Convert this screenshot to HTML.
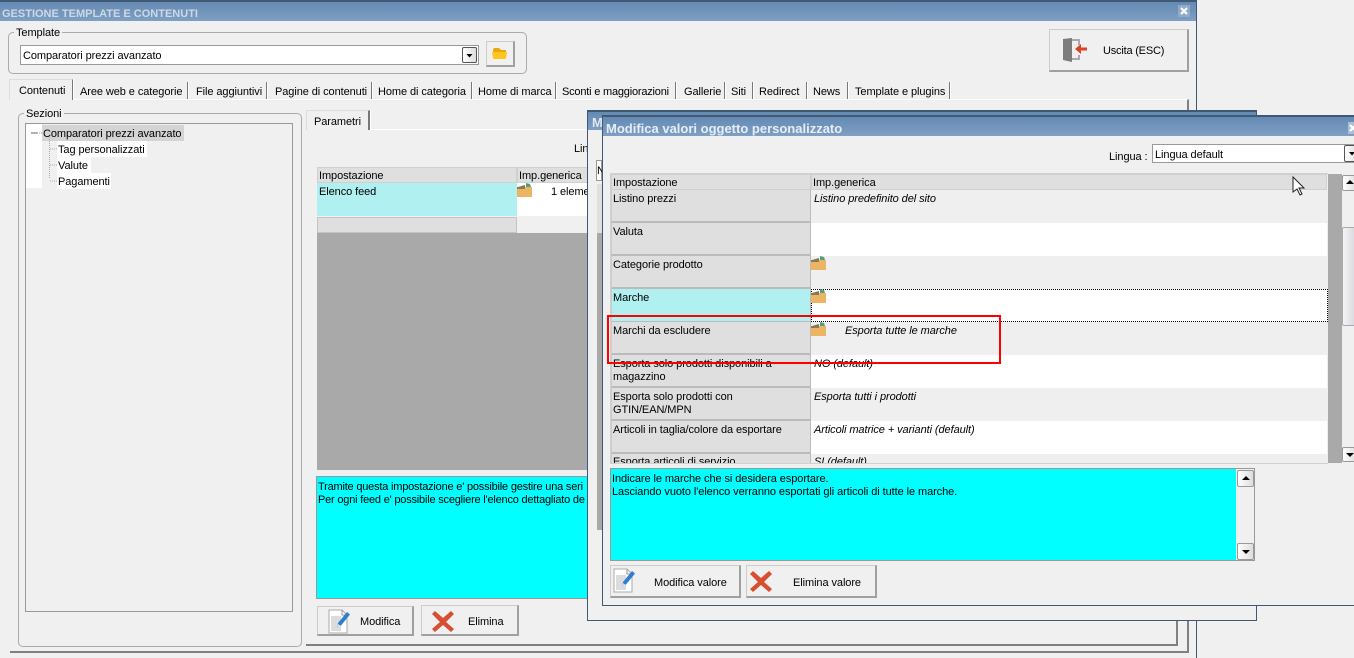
<!DOCTYPE html>
<html><head><meta charset="utf-8"><style>
html,body{margin:0;padding:0;width:1354px;height:658px;overflow:hidden;background:#f0f0f0}
body{position:relative;font:11px/13px "Liberation Sans",sans-serif;color:#000}
div,span.t{position:absolute;box-sizing:border-box}
.t{position:absolute;white-space:nowrap;letter-spacing:-.08px;margin-top:2px}
i.t{font-style:italic}
svg{position:absolute;overflow:visible}
.title{background:linear-gradient(#658ab3,#7f9fc3)}
.win{background:#f0f0f0;border:1px solid #3f5873;border-top-width:2px}
.grp{border:1px solid #aaa;border-radius:5px}
.btn{background:#f0f0f0;border:1px solid #ccc;border-right:2px solid #a0a0a0;border-bottom:2px solid #a0a0a0}
.tab{top:82px;height:17px;border-right:1px solid #777;box-shadow:1px 0 0 #fff}
.hd{background:#dfdfdf;border:1px solid #d0d0d0}
.c1{left:611px;width:200px;height:33px;background:#dfdfdf;border-bottom:2px solid #bbb;border-right:1px solid #bbb;border-left:1px solid #ccc}
.c2{left:811px;width:516px;height:33px}
.sb{background:linear-gradient(90deg,#fff,#ddd);border:1px solid #999;border-radius:2px}
</style></head><body>

<!-- main window -->
<div style="left:-2px;top:0;width:1199px;height:670px;background:#f0f0f0;border:1px solid #3f5873;border-top-width:2px"></div>
<div class="title" style="left:0;top:2px;width:1196px;height:19px"></div>
<span class="t" style="left:2px;top:6px;font-weight:bold;color:#cdd9e6;letter-spacing:0">GESTIONE TEMPLATE E CONTENUTI</span>
<div style="left:1178px;top:5px;width:12px;height:12px;background:#8fabc9"></div>
<svg style="left:1178px;top:5px" width="12" height="12"><path d="M3 3l6 6M9 3l-6 6" stroke="#fff" stroke-width="2.200"/></svg>

<!-- template -->
<div class="grp" style="left:8px;top:32px;width:519px;height:42px"></div>
<span class="t" style="left:14px;top:27px;background:#f0f0f0;padding:0 2px;margin-top:0">Template</span>
<div style="left:20px;top:45px;width:459px;height:20px;background:#fff;border:1px solid #999"></div>
<span class="t" style="left:23px;top:48px">Comparatori prezzi avanzato</span>
<div class="sb" style="left:462px;top:47px;width:15px;height:16px;border-color:#555"></div>
<svg style="left:462px;top:47px" width="15" height="16"><path d="M4.500 7h6l-3 3.500z" fill="#000"/></svg>
<div class="btn" style="left:486px;top:41px;width:29px;height:26px"></div>
<svg style="left:492px;top:47px" width="16" height="13"><path d="M1 3q0 -2 2 -2h4l2 2h5v3H1z" fill="#e9a90c"/><path d="M0 5h15l-1 6q0 1 -1 1H2q-1 0 -1 -1z" fill="#fcc61f"/></svg>

<div class="btn" style="left:1049px;top:29px;width:140px;height:43px"></div>
<svg style="left:1062px;top:38px" width="26" height="24"><path d="M1 1l9 -1v24l-9 -2z" fill="#7c7c7c"/><path d="M10 2h7v5M17 17v4h-7" fill="none" stroke="#aaa" stroke-width="2"/><path d="M13 11l6 -5v3.500h6v3h-6v3.500z" fill="#d9432a"/></svg>
<span class="t" style="left:1103px;top:43px;letter-spacing:-.2px">Uscita (ESC)</span>

<!-- tabs -->
<div style="left:10px;top:99px;width:1179px;height:554px;border-right:2px solid #808080;border-bottom:2px solid #808080;border-top:1px solid #fff"></div>
<div class="tab" style="left:9px;top:79px;width:64px;height:21px;border-left:1px solid #ddd;border-top:1px solid #ddd;background:#f0f0f0"></div><span class="t" style="left:19px;top:83px">Contenuti</span>
<div class="tab" style="left:74px;width:114px"></div><span class="t" style="left:80px;top:84px">Aree web e categorie</span>
<div class="tab" style="left:188px;width:79px"></div><span class="t" style="left:196px;top:84px">File aggiuntivi</span>
<div class="tab" style="left:267px;width:105px"></div><span class="t" style="left:275px;top:84px">Pagine di contenuti</span>
<div class="tab" style="left:372px;width:100px"></div><span class="t" style="left:378px;top:84px">Home di categoria</span>
<div class="tab" style="left:472px;width:84px"></div><span class="t" style="left:478px;top:84px">Home di marca</span>
<div class="tab" style="left:556px;width:120px"></div><span class="t" style="left:562px;top:84px;letter-spacing:-.2px">Sconti e maggiorazioni</span>
<div class="tab" style="left:676px;width:49px"></div><span class="t" style="left:684px;top:84px">Gallerie</span>
<div class="tab" style="left:725px;width:28px"></div><span class="t" style="left:731px;top:84px">Siti</span>
<div class="tab" style="left:753px;width:54px"></div><span class="t" style="left:759px;top:84px">Redirect</span>
<div class="tab" style="left:807px;width:41px"></div><span class="t" style="left:813px;top:84px">News</span>
<div class="tab" style="left:848px;width:102px"></div><span class="t" style="left:855px;top:84px">Template e plugins</span>

<!-- sezioni -->
<div class="grp" style="left:18px;top:113px;width:284px;height:534px"></div>
<span class="t" style="left:24px;top:108px;background:#f0f0f0;padding:0 2px;margin-top:0">Sezioni</span>
<div style="left:25px;top:123px;width:268px;height:489px;border:1px solid #999;background:#f0f0f0"></div>
<div style="left:26px;top:124px;width:16px;height:64px;background:#fff"></div>
<div style="left:42px;top:125px;width:142px;height:16px;background:#d4d4d4"></div>
<div style="left:57px;top:141px;width:90px;height:16px;background:#fff"></div>
<div style="left:57px;top:157px;width:34px;height:16px;background:#fff"></div>
<div style="left:57px;top:173px;width:54px;height:16px;background:#fff"></div>
<svg style="left:30px;top:128px" width="30" height="60"><path d="M1 5h7" stroke="#666"/><path d="M9 5h3M19.500 9v42M20 21h7M20 37h7M20 53h7" stroke="#aaa" stroke-dasharray="1 1"/></svg>
<span class="t" style="left:43px;top:126px">Comparatori prezzi avanzato</span>
<span class="t" style="left:58px;top:142px">Tag personalizzati</span>
<span class="t" style="left:58px;top:158px">Valute</span>
<span class="t" style="left:58px;top:174px">Pagamenti</span>

<!-- parametri panel -->
<div style="left:306px;top:129px;width:872px;height:517px;border-right:2px solid #808080;border-bottom:2px solid #808080;border-top:1px solid #fff"></div>
<div class="tab" style="left:306px;top:110px;width:64px;height:20px;border-left:1px solid #ddd;border-top:1px solid #ddd;border-right:2px solid #777;background:#f0f0f0"></div>
<span class="t" style="left:314px;top:114px">Parametri</span>
<span class="t" style="left:574px;top:141px">Lin</span>
<div class="hd" style="left:317px;top:167px;width:200px;height:16px"></div>
<div class="hd" style="left:517px;top:167px;width:80px;height:16px"></div>
<span class="t" style="left:319px;top:168px">Impostazione</span>
<span class="t" style="left:519px;top:168px">Imp.generica</span>
<div style="left:317px;top:183px;width:200px;height:33px;background:#b0f0f0"></div>
<div style="left:517px;top:183px;width:80px;height:33px;background:#fff"></div>
<span class="t" style="left:319px;top:184px">Elenco feed</span>
<svg style="left:517px;top:183px" width="16" height="14" viewBox="0 0 16 14"><use href="#box"/></svg>
<span class="t" style="left:551px;top:184px">1 eleme</span>
<div style="left:317px;top:217px;width:200px;height:16px;background:#dfdfdf;border:1px solid #c4c4c4"></div>
<div style="left:317px;top:233px;width:280px;height:237px;background:#a9a9a9"></div>
<div style="left:316px;top:476px;width:290px;height:123px;background:#0ff;border:1px solid #999"></div>
<span class="t" style="left:318px;top:479px;letter-spacing:-.2px">Tramite questa impostazione e' possibile gestire una seri</span>
<span class="t" style="left:318px;top:492px;letter-spacing:-.2px">Per ogni feed e' possibile scegliere l'elenco dettagliato de</span>
<div class="btn" style="left:317px;top:606px;width:97px;height:30px"></div>
<svg style="left:328px;top:608px" width="24" height="26"><use href="#pen"/></svg>
<span class="t" style="left:360px;top:614px">Modifica</span>
<div class="btn" style="left:421px;top:605px;width:98px;height:31px"></div>
<svg style="left:431px;top:608px" width="24" height="24"><use href="#xx"/></svg>
<span class="t" style="left:468px;top:614px">Elimina</span>

<!-- behind window -->
<div class="win" style="left:587px;top:110px;width:670px;height:511px"></div>
<div class="title" style="left:588px;top:112px;width:668px;height:18px"></div>
<span class="t" style="left:592px;top:114px;color:#dfe7f0;font-weight:bold;font-size:13px">M</span>
<div style="left:596px;top:160px;width:6px;height:21px;background:#fff;border:1px solid #999"></div>
<span class="t" style="left:597px;top:163px">N</span>
<div style="left:597px;top:184px;width:5px;height:346px;background:#a9a9a9"></div>
<div style="left:597px;top:184px;width:5px;height:49px;background:#dfdfdf"></div>

<!-- front window -->
<div class="win" style="left:602px;top:115px;width:770px;height:491px"></div>
<div class="title" style="left:603px;top:117px;width:760px;height:19px"></div>
<span class="t" style="left:606px;top:120px;font-weight:bold;color:#e6edf5;font-size:13px;letter-spacing:0">Modifica valori oggetto personalizzato</span>
<div style="left:1348px;top:122px;width:8px;height:12px;background:#a9bfd7"></div>
<svg style="left:1348px;top:122px" width="8" height="12"><path d="M2 3l6 6M8 3l-6 6" stroke="#fff" stroke-width="2.200"/></svg>

<span class="t" style="left:1109px;top:149px">Lingua :</span>
<div style="left:1152px;top:144px;width:210px;height:19px;background:#fff;border:1px solid #999"></div>
<span class="t" style="left:1155px;top:147px">Lingua default</span>
<div class="sb" style="left:1344px;top:145px;width:15px;height:17px;border-color:#555"></div>
<svg style="left:1344px;top:145px" width="10" height="17"><path d="M5 7h6l-3 3.500z" fill="#000"/></svg>

<!-- table -->
<div style="left:610px;top:173px;width:718px;height:291px;background:#efefef;border:1px solid #d0d0d0;border-right:0"></div>
<div class="hd" style="left:611px;top:174px;width:200px;height:16px"></div>
<div class="hd" style="left:811px;top:174px;width:516px;height:16px"></div>
<span class="t" style="left:613px;top:175px">Impostazione</span>
<span class="t" style="left:813px;top:175px">Imp.generica</span>

<div class="c1" style="top:190px"></div><div class="c2" style="top:190px;background:#efefef"></div>
<div class="c1" style="top:223px"></div><div class="c2" style="top:223px;background:#fff"></div>
<div class="c1" style="top:256px"></div><div class="c2" style="top:256px;background:#efefef"></div>
<div class="c1" style="top:289px;background:#b0f0f0;border-bottom:1px solid #bbb"></div><div class="c2" style="top:289px;height:33px;width:517px;background:#fff;border:1px dotted #000"></div>
<div class="c1" style="top:322px"></div><div class="c2" style="top:322px;background:#efefef"></div>
<div class="c1" style="top:355px"></div><div class="c2" style="top:355px;background:#fff"></div>
<div class="c1" style="top:388px"></div><div class="c2" style="top:388px;background:#efefef"></div>
<div class="c1" style="top:421px"></div><div class="c2" style="top:421px;background:#fff"></div>
<div class="c1" style="top:454px;height:9px;border-bottom:0"></div><div class="c2" style="top:454px;height:9px;background:#efefef"></div>

<span class="t" style="left:613px;top:191px">Listino prezzi</span>
<i class="t" style="left:814px;top:191px">Listino predefinito del sito</i>
<span class="t" style="left:613px;top:224px">Valuta</span>
<span class="t" style="left:613px;top:257px">Categorie prodotto</span>
<span class="t" style="left:613px;top:290px">Marche</span>
<span class="t" style="left:613px;top:323px">Marchi da escludere</span>
<i class="t" style="left:845px;top:323px">Esporta tutte le marche</i>
<span class="t" style="left:613px;top:356px">Esporta solo prodotti disponibili a</span>
<span class="t" style="left:613px;top:369px">magazzino</span>
<i class="t" style="left:814px;top:356px">NO (default)</i>
<span class="t" style="left:613px;top:389px">Esporta solo prodotti con</span>
<span class="t" style="left:613px;top:402px">GTIN/EAN/MPN</span>
<i class="t" style="left:814px;top:389px">Esporta tutti i prodotti</i>
<span class="t" style="left:613px;top:422px">Articoli in taglia/colore da esportare</span>
<i class="t" style="left:814px;top:422px">Articoli matrice + varianti (default)</i>
<div style="left:611px;top:454px;width:716px;height:9px;overflow:hidden">
<span class="t" style="left:2px;top:0">Esporta articoli di servizio</span>
<i class="t" style="left:203px;top:0">SI (default)</i></div>

<svg style="left:811px;top:256px" width="16" height="14" viewBox="0 0 16 14"><use href="#box"/></svg>
<svg style="left:811px;top:289px" width="16" height="14" viewBox="0 0 16 14"><use href="#box"/></svg>
<svg style="left:811px;top:322px" width="16" height="14" viewBox="0 0 16 14"><use href="#box"/></svg>

<!-- scrollbars -->
<div style="left:1328px;top:174px;width:14px;height:289px;background:#a9a9a9"></div>
<div class="sb" style="left:1342px;top:175px;width:16px;height:16px"></div>
<svg style="left:1342px;top:175px" width="12" height="16"><path d="M4 9h8l-4 -4z" fill="#000"/></svg>
<div class="sb" style="left:1342px;top:227px;width:16px;height:99px;border-color:#aaa;background:linear-gradient(90deg,#f4f4f4,#d4d4dc)"></div>
<div class="sb" style="left:1342px;top:447px;width:16px;height:15px"></div>
<svg style="left:1342px;top:447px" width="12" height="15"><path d="M4 6h8l-4 4z" fill="#000"/></svg>

<!-- cyan -->
<div style="left:610px;top:468px;width:645px;height:93px;background:#0ff;border:1px solid #999"></div>
<div style="left:1236px;top:469px;width:18px;height:91px;background:#f0f0f0"></div>
<div class="sb" style="left:1237px;top:470px;width:17px;height:17px"></div>
<svg style="left:1237px;top:470px" width="17" height="17"><path d="M5 10h8l-4 -4z" fill="#000"/></svg>
<div class="sb" style="left:1237px;top:543px;width:17px;height:17px"></div>
<svg style="left:1237px;top:543px" width="17" height="17"><path d="M5 7h8l-4 4z" fill="#000"/></svg>
<span class="t" style="left:612px;top:471px">Indicare le marche che si desidera esportare.</span>
<span class="t" style="left:612px;top:484px">Lasciando vuoto l'elenco verranno esportati gli articoli di tutte le marche.</span>

<div class="btn" style="left:610px;top:565px;width:131px;height:33px"></div>
<svg style="left:613px;top:567px" width="24" height="26"><use href="#pen"/></svg>
<span class="t" style="left:654px;top:575px">Modifica valore</span>
<div class="btn" style="left:746px;top:565px;width:131px;height:33px"></div>
<svg style="left:749px;top:568px" width="24" height="24"><use href="#xx"/></svg>
<span class="t" style="left:793px;top:575px">Elimina valore</span>

<!-- red highlight -->
<div style="left:607px;top:315px;width:394px;height:49px;border:2px solid #f00"></div>

<!-- cursor -->
<svg style="left:1292px;top:176px" width="14" height="20"><path d="M1 1v15l4 -3 3 6 2 -1 -3 -6h5z" fill="#fff" stroke="#222" stroke-width="1"/></svg>

<svg width="0" height="0" style="left:0;top:0"><defs>
<g id="box"><path d="M1 4l7 -2v3z" fill="#7a7a55"/><path d="M9 0l4 1 1 3h-5z" fill="#4f9f80"/><path d="M0 4h15v10H0z" fill="#ecb565"/><path d="M0 4h8v2H0z" fill="#8a7a50"/></g>
<g id="pen"><path d="M1 2h13l5 5v18H1z" fill="#fff" stroke="#aaa"/><path d="M3 8h10v15H3z" fill="#dcdcdc"/><path d="M14 2v5h5" fill="none" stroke="#999"/><path d="M9 20l1 -5 9 -11 3 2.500 -9 11z" fill="#2f7fd0"/><path d="M9 20l1 -4 3 2z" fill="#ddd"/></g>
<g id="xx"><path d="M4 3l8 7 8 -7 3 3 -8 8 8 7 -3 3 -8 -7 -8 7 -3 -3 8 -7 -8 -8z" fill="#d74e30"/></g>
</defs></svg>
</body></html>
